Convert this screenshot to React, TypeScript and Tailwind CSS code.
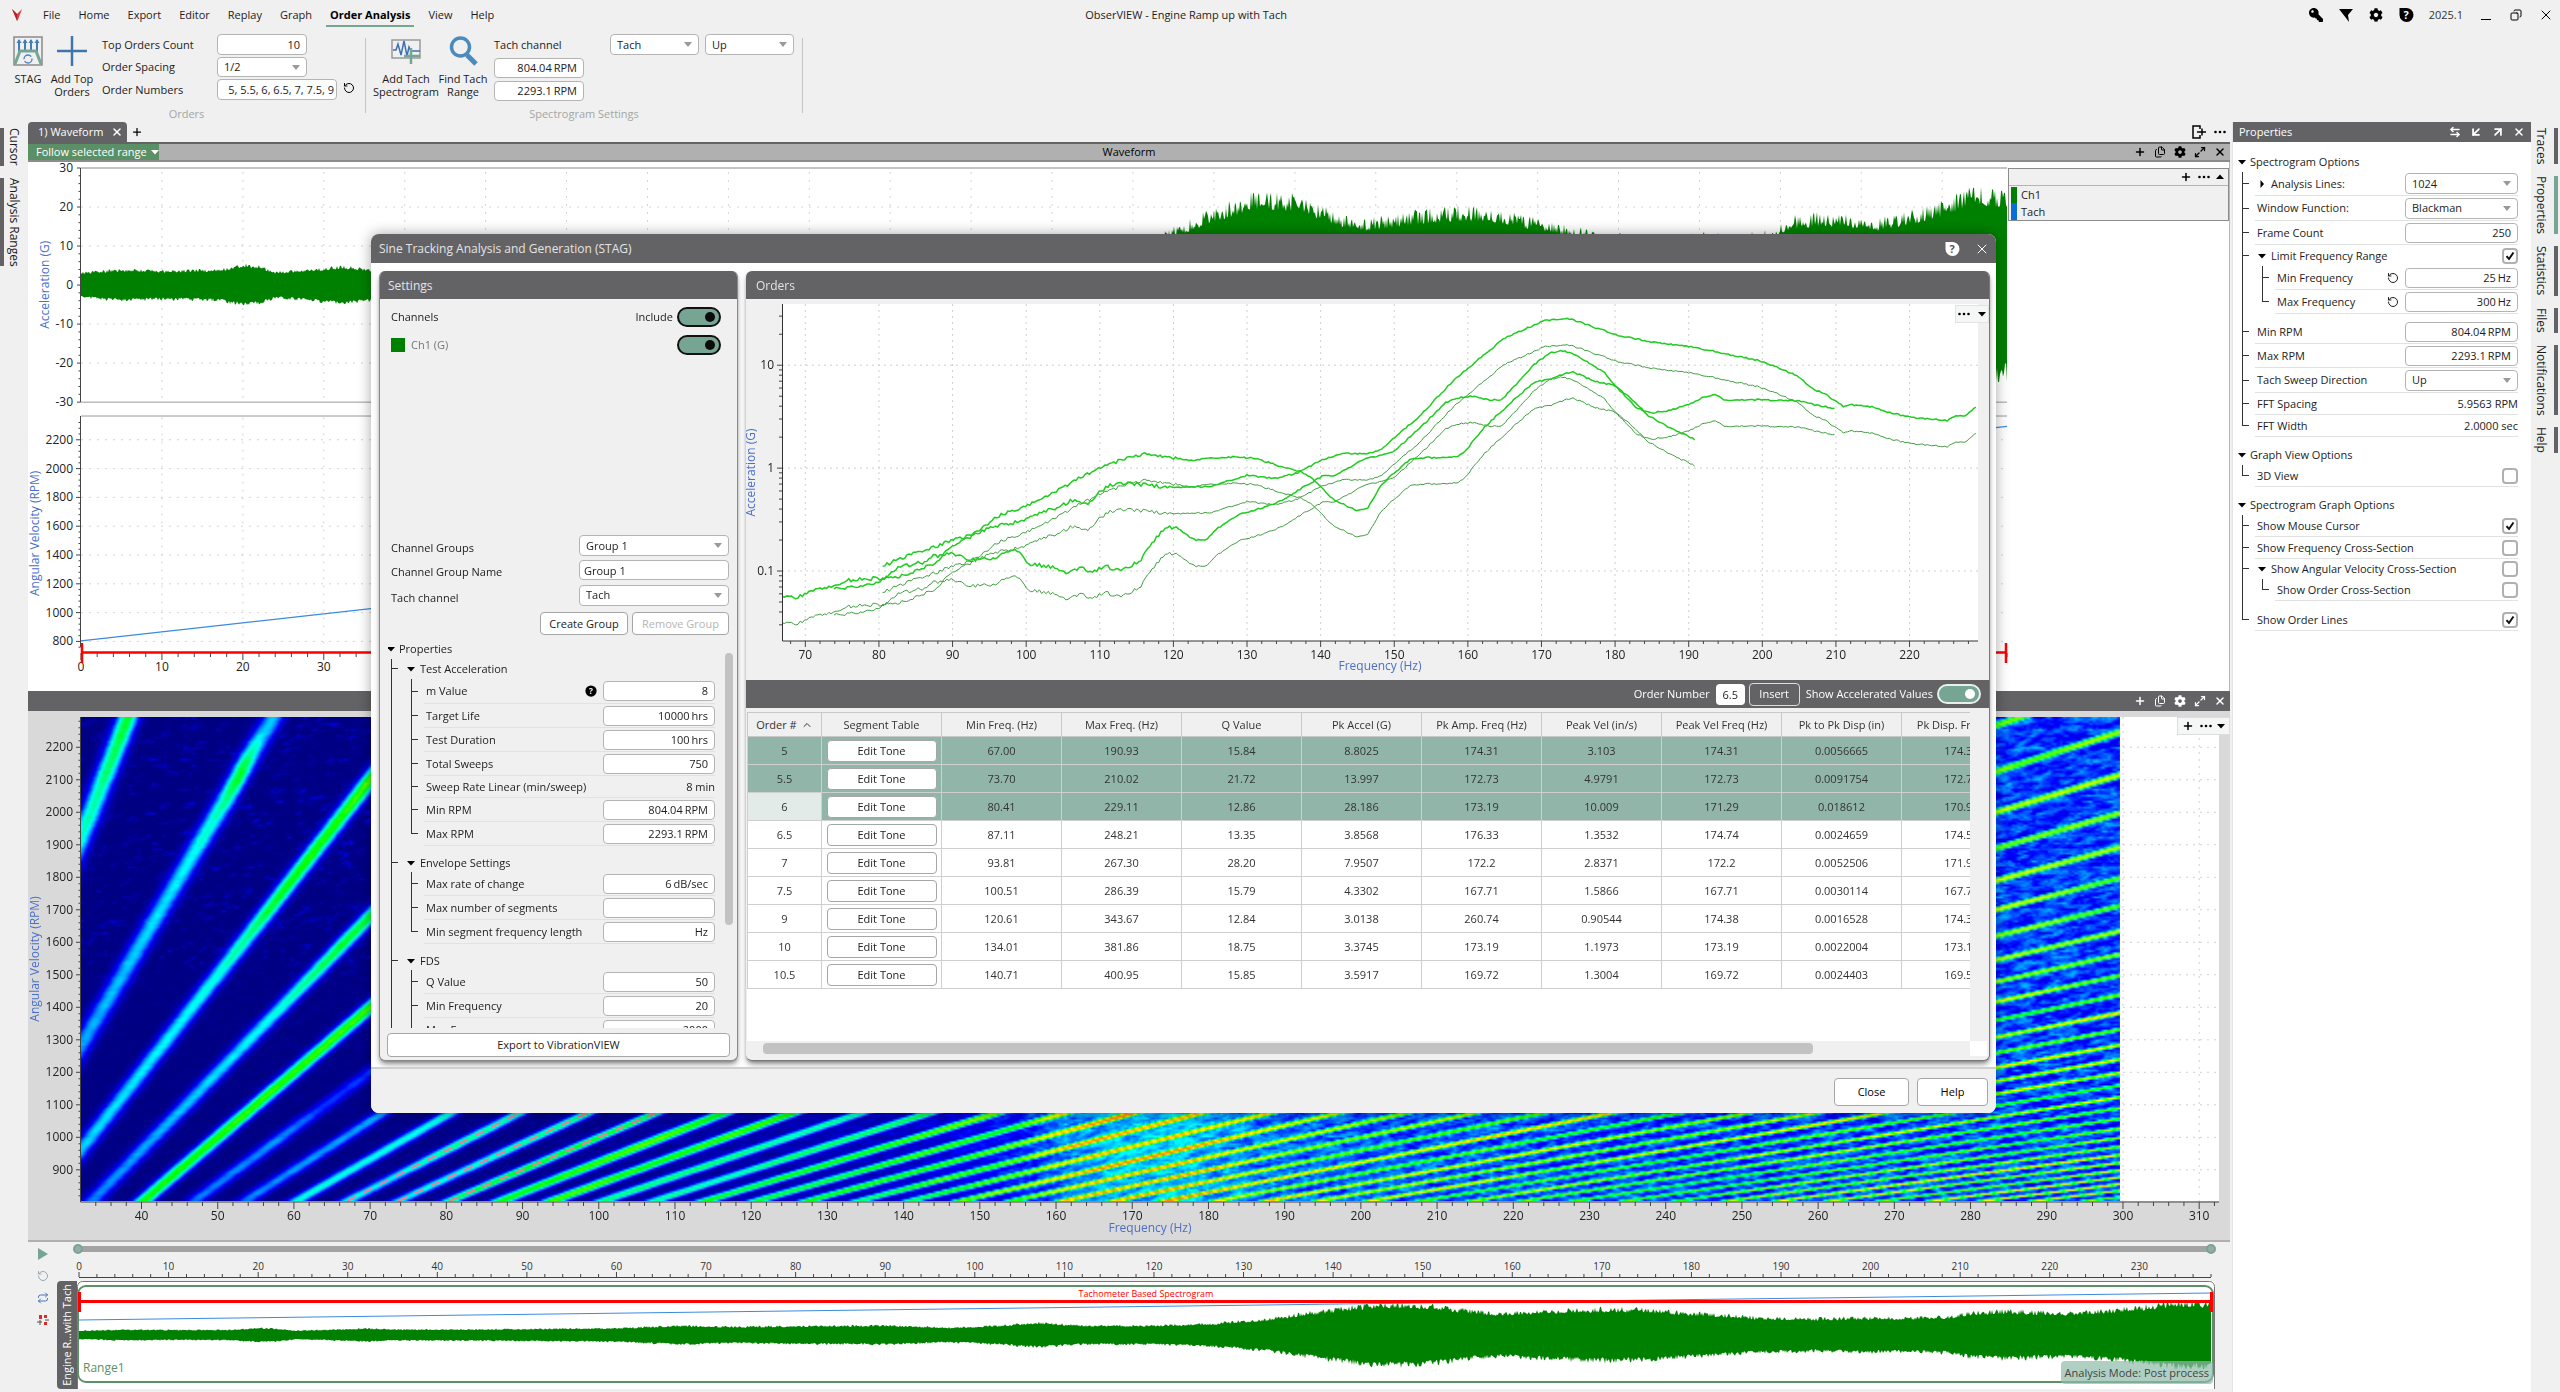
import { useEffect, useLayoutEffect, useRef, useState } from "react"
import type { ReactNode } from "react"
import { FaCog, FaKey } from "react-icons/fa"
import { ArrowDownLeft, ArrowLeftRight, ArrowUpRight, ChevronUp, Copy, Files, Maximize2, Plus, Repeat, RotateCw, X } from "lucide-react"

type Point = [number, number]

// ---------- helpers ----------

function useSize() {
  const ref = useRef<HTMLDivElement>(null)
  const [size, setSize] = useState({ w: 0, h: 0 })
  useLayoutEffect(() => {
    const el = ref.current
    if (!el) return
    setSize({ w: el.clientWidth, h: el.clientHeight })
    const observer = new ResizeObserver(() => setSize({ w: el.clientWidth, h: el.clientHeight }))
    observer.observe(el)
    return () => observer.disconnect()
  }, [])
  return { ref, ...size }
}

function range(from: number, to: number, step: number) {
  const out: number[] = []
  for (let v = from; v <= to + step / 1000; v += step) out.push(v)
  return out
}

function interp(points: Point[], x: number) {
  if (x <= points[0][0]) return points[0][1]
  for (let i = 1; i < points.length; i++) {
    if (x <= points[i][0]) {
      const [x0, y0] = points[i - 1]
      const [x1, y1] = points[i]
      return y0 + ((x - x0) / (x1 - x0)) * (y1 - y0)
    }
  }
  return points[points.length - 1][1]
}

function hash(x: number, y: number) {
  let h = Math.imul(x | 0, 374761393) + Math.imul(y | 0, 668265263)
  h = Math.imul(h ^ (h >>> 13), 1274126177)
  return ((h ^ (h >>> 16)) >>> 0) / 4294967295
}

function noise(x: number, y: number) {
  const ix = Math.floor(x)
  const iy = Math.floor(y)
  const fx = x - ix
  const fy = y - iy
  const a = hash(ix, iy) * (1 - fx) + hash(ix + 1, iy) * fx
  const b = hash(ix, iy + 1) * (1 - fx) + hash(ix + 1, iy + 1) * fx
  return a * (1 - fy) + b * fy
}

// ---------- data ----------

const DURATION = 238
const MIN_RPM = 804.04
const MAX_RPM = 2293.1

// [seconds, G]
const envelope: Point[] = [
  [0, 3.2], [5, 4], [10, 3.7], [17, 3.9], [20, 5.2], [22, 4.8], [24, 3.3], [28, 3.9], [32, 4.8], [36, 4], [44, 4.2], [52, 4.6],
  [60, 5], [67, 7], [72, 6], [80, 6.6], [90, 7], [97, 5.4], [102, 6.6], [107, 9], [112, 7], [120, 7], [127, 8.6], [133, 12],
  [137, 16], [140, 18.5], [145, 22.5], [150, 22], [153, 19.7], [156, 17], [159, 16], [165, 18], [170, 19], [174, 18.8], [178, 17],
  [183, 15], [188, 12.6], [194, 12], [199, 12.8], [204, 12.4], [209, 13.4], [211, 16.4], [215, 17.6], [220, 16.6], [222, 16],
  [227, 18.3], [231, 21], [234, 23.8], [238, 23],
]

// [Hz, dB re 1 G]
const order5: Point[] = [
  [66.9, -25.2], [69, -25.1], [71, -23.6], [73.7, -22.8], [75.7, -21.8], [80, -21.4], [83, -21], [85.6, -19.7], [87.9, -18.4],
  [88.9, -16.2], [90.2, -14.8], [92.5, -13.3], [93.8, -11.7], [96.4, -9.2], [99.7, -7.6], [102, -6.1], [105.7, -3.1], [109.6, -0.1],
  [114, 2.1], [116.4, 2.7], [119, 2.3], [122.4, 1.5], [125.2, 2], [128.4, 2.2], [131.2, 1.9], [134, 0.6], [137.1, -0.6], [138.7, -1.9],
  [141.9, -6.3], [145.1, -8.3], [146.3, -7.9], [148.3, -3.1], [149.9, -1.1], [152.3, 1.9], [158.6, 2.2], [159.8, 3.5], [161.8, 7.3],
  [164.2, 10.6], [166.6, 13.7], [169, 16.7], [171.4, 17.4], [174.2, 18.8], [177, 17], [180, 16], [181.8, 14], [184.5, 10.2],
  [187.7, 7.7], [190.9, 5.5],
]

const order55: Point[] = [
  [73.9, -23.5], [79.6, -22.5], [80.6, -21.4], [82.9, -19.2], [85.9, -18.3], [87.2, -17.2], [89.8, -16.6], [92.5, -17.8], [95.8, -17.5],
  [98.1, -15.9], [99.1, -16.5], [100.4, -18.6], [103, -19.1], [105.7, -20.3], [107.6, -19.4], [108.6, -20.3], [110.9, -19.1],
  [112.6, -19.9], [114.1, -19.1], [115.6, -17.8], [116.8, -15], [118.8, -11.7], [120.4, -11.4], [121.6, -12.8], [123, -14],
  [124.4, -13.9], [126, -11.7], [128.8, -9.1], [133.9, -6.9], [137.1, -4.2], [140.3, -1.5], [141.9, -1.4], [145.9, 1.7], [149.9, 3.2],
  [153.1, 7.3], [157, 12.7], [159, 13.8], [160.6, 14], [163, 13.2], [164.6, 13.3], [166.6, 16.3], [169, 20.1], [171, 22.3],
  [172.7, 22.9], [174.6, 22.1], [178.6, 18.5], [180.2, 15.8], [182.9, 11.7], [184.9, 10.7], [187.3, 11.2], [190, 12.4], [192.1, 13.8],
  [193.7, 14.3], [194.9, 13.2], [200, 13.3], [204.9, 13.1], [207.3, 12.2], [209.9, 11.6],
]

const order6: Point[] = [
  [80.5, -19.1], [83, -17.5], [87.2, -15.5], [90.2, -13.9], [93, -12.8], [95.1, -11.5], [98.1, -10.7], [100.4, -9.8], [103.4, -7.8],
  [104.3, -7.8], [106, -6.3], [107.1, -6.3], [108.3, -7.2], [110, -4.5], [111.6, -3.2], [114, -3], [120.4, -3.8], [125.2, -3.5],
  [130, -1.4], [134, -2], [136.7, -1], [139.9, 1.4], [142.7, 2.8], [146.3, 2.8], [148.3, 3.6], [149.9, 5.8], [153.5, 10.2],
  [157.8, 16.7], [161, 20.6], [165, 25.3], [168.2, 27.3], [170.6, 28.8], [173.8, 29], [177, 27.5], [180.2, 25.9], [184.9, 24.5],
  [190.5, 23.6], [195.3, 22.1], [199.3, 21], [202.5, 19.3], [204.9, 17.8], [206.9, 15.4], [208.5, 14.4], [211.1, 11.9], [212, 12.3],
  [215.2, 11.9], [216.8, 10.9], [220.4, 9.8], [223.2, 9.5], [225.2, 9.2], [226, 10], [227.6, 10.2], [229, 11.9],
]

const headings = [
  "Segment Table", "Min Freq. (Hz)", "Max Freq. (Hz)", "Q Value", "Pk Accel (G)", "Pk Amp. Freq (Hz)",
  "Peak Vel (in/s)", "Peak Vel Freq (Hz)", "Pk to Pk Disp (in)", "Pk Disp. Freq (Hz)",
]

const orders = [
  ["5", "67.00", "190.93", "15.84", "8.8025", "174.31", "3.103", "174.31", "0.0056665", "174.31"],
  ["5.5", "73.70", "210.02", "21.72", "13.997", "172.73", "4.9791", "172.73", "0.0091754", "172.73"],
  ["6", "80.41", "229.11", "12.86", "28.186", "173.19", "10.009", "171.29", "0.018612", "170.93"],
  ["6.5", "87.11", "248.21", "13.35", "3.8568", "176.33", "1.3532", "174.74", "0.0024659", "174.53"],
  ["7", "93.81", "267.30", "28.20", "7.9507", "172.2", "2.8371", "172.2", "0.0052506", "171.93"],
  ["7.5", "100.51", "286.39", "15.79", "4.3302", "167.71", "1.5866", "167.71", "0.0030114", "167.71"],
  ["9", "120.61", "343.67", "12.84", "3.0138", "260.74", "0.90544", "174.38", "0.0016528", "174.38"],
  ["10", "134.01", "381.86", "18.75", "3.3745", "173.19", "1.1973", "173.19", "0.0022004", "173.19"],
  ["10.5", "140.71", "400.95", "15.85", "3.5917", "169.72", "1.3004", "169.72", "0.0024403", "169.53"],
]

// ---------- small controls ----------

function Field({ label, value, unit = "", className = "" }: { label: string; value: string; unit?: string; className?: string }) {
  return (
    <span className={`flex h-5 items-center rounded border border-[#b4b4b4] bg-white pl-1 pr-1.5 ${className}`}>
      <input aria-label={label} defaultValue={value} className="w-0 min-w-0 flex-1 bg-transparent text-right outline-none" />
      {unit && <span className="pl-0.5">{unit}</span>}
    </span>
  )
}

function Select({ label, value, className = "" }: { label: string; value: string; className?: string }) {
  return (
    <span className={`grid items-center rounded border border-[#b4b4b4] bg-white ${className}`}>
      <select aria-label={label} defaultValue={value} className="col-start-1 row-start-1 h-full w-full appearance-none bg-transparent px-1.5 outline-none">
        <option>{value}</option>
      </select>
      <svg viewBox="0 0 8 5" className="pointer-events-none col-start-1 row-start-1 mr-1.5 h-[5px] w-2 justify-self-end" fill="#999">
        <path d="M0 0h8L4 5z" />
      </svg>
    </span>
  )
}

function Switch({ label, dark = false }: { label: string; dark?: boolean }) {
  return (
    <button
      role="switch"
      aria-checked="true"
      aria-label={label}
      className={`flex h-5 w-11 items-center justify-end rounded-full bg-[#76a594] px-1 ${dark ? "border-2 border-[#111]" : "border-2 border-[#e8efec]"}`}
    >
      <span className={`h-2.5 w-2.5 rounded-full ${dark ? "bg-[#0c0c0c]" : "bg-white"}`} />
    </button>
  )
}

function Check({ label, on = false }: { label: string; on?: boolean }) {
  return (
    <span className="grid h-4 w-4 place-items-center">
      <input
        type="checkbox"
        aria-label={label}
        defaultChecked={on}
        className="col-start-1 row-start-1 h-4 w-4 appearance-none rounded border-2 border-[#b0b0b0] bg-white"
      />
      {on && (
        <svg viewBox="0 0 10 10" className="pointer-events-none col-start-1 row-start-1 h-2.5 w-2.5" fill="none" stroke="#111" strokeWidth="2">
          <path d="M1.500 5.200 4 8l4.500-6.500" />
        </svg>
      )}
    </span>
  )
}

function Caret({ dir = "down", className = "" }: { dir?: "down" | "right" | "up"; className?: string }) {
  const d = { down: "M0 2h8L4 6.500z", right: "M2.500 0v8L6 4z", up: "M0 6h8L4 1.500z" }[dir]
  return (
    <svg viewBox="0 0 8 8" className={`h-2 w-2 shrink-0 ${className}`} fill="currentColor">
      <path d={d} />
    </svg>
  )
}

function HelpBadge({ className = "", mark, round = false }: { className?: string; mark: string; round?: boolean }) {
  return (
    <svg viewBox="0 0 16 16" className={className}>
      {round ? <circle cx="8" cy="8" r="7.500" fill="currentColor" /> : <path d="M1.500 1H8a7 7 0 1 1-6.500 7z" fill="currentColor" />}
      <text x="8" y="12" textAnchor="middle" fontSize="11" fontWeight="700" fill={mark}>?</text>
    </svg>
  )
}

function Dots({ className = "" }: { className?: string }) {
  return (
    <svg viewBox="0 0 12 4" className={`h-1 w-3 ${className}`} fill="currentColor">
      <circle cx="1.500" cy="2" r="1.300" />
      <circle cx="6" cy="2" r="1.300" />
      <circle cx="10.500" cy="2" r="1.300" />
    </svg>
  )
}

function Button({ children, className = "", disabled = false }: { children: ReactNode; className?: string; disabled?: boolean }) {
  return (
    <button disabled={disabled} className={`rounded border border-[#a6a6a6] bg-white text-center disabled:text-[#b5b5b5] ${className}`}>
      {children}
    </button>
  )
}

// ---------- property tree ----------

function Branch({ last = false }: { last?: boolean }) {
  return (
    <span className="flex w-[13px] shrink-0 flex-col self-stretch pr-1.5">
      <span className="h-1/2 border-b border-l border-[#333]" />
      <span className={`h-1/2 ${last ? "" : "border-l border-[#333]"}`} />
    </span>
  )
}

interface RowProps {
  label: string
  height?: string
  depth?: 1 | 2
  last?: boolean
  caret?: "down" | "right"
  line?: boolean
  children?: ReactNode
}

function Row({ label, height = "h-6", depth = 1, last, caret, line = true, children }: RowProps) {
  return (
    <div className={`flex ${height}`}>
      {depth === 2 && <span className="w-5 shrink-0 border-l border-[#333]" />}
      <Branch last={last} />
      <div className={`flex min-w-0 flex-1 items-center ${line ? "border-b border-[#e0e3e2]" : ""}`}>
        {caret && <Caret dir={caret} className="ml-[3px] mr-[3px] text-black" />}
        <span className="flex-1 whitespace-nowrap pl-0.5">{label}</span>
        {children}
      </div>
    </div>
  )
}

function Gap({ height = "h-2", open = true }: { height?: string; open?: boolean }) {
  return <div className={`${height} ${open ? "border-l border-[#333]" : ""}`} />
}

function TreeHeading({ children }: { children: string }) {
  return (
    <div className="flex h-5 items-center gap-1">
      <Caret className="-ml-1 text-black" />
      {children}
    </div>
  )
}

// ---------- header ----------

const menu = ["File", "Home", "Export", "Editor", "Replay", "Graph", "Order Analysis", "View", "Help"]

function TitleBar() {
  return (
    <header className="flex h-[30px] shrink-0 items-center">
      <nav className="flex w-[42%] items-center gap-[18px] pl-3">
        <svg viewBox="0 0 10 12" className="mr-[3px] h-3 w-2.5">
          <path d="M0 0 5 5 10 0 5.500 12z" fill="#e23a3a" />
          <path d="M0 0 5 5v7z" fill="#b31f24" />
        </svg>
        {menu.map((item) => (
          <a key={item} href="#" className={item === "Order Analysis" ? "-mx-1 mt-1 border-b-2 border-[#76a594] px-1 pb-0.5 font-bold text-black" : ""}>
            {item}
          </a>
        ))}
      </nav>
      <h1 className="pl-2.5">ObserVIEW - Engine Ramp up with Tach</h1>
      <div className="ml-auto flex items-center text-black">
        <button aria-label="License" className="w-[30px]"><FaKey className="mx-auto h-3.5 w-3.5 -scale-x-100" /></button>
        <button aria-label="Filter" className="w-[30px]">
          <svg viewBox="0 0 14 14" className="mx-auto h-3.5 w-3.5"><path d="M0 1h14L9 7l1 7-3-4z" /></svg>
        </button>
        <button aria-label="Settings" className="w-[30px]"><FaCog className="mx-auto h-3.5 w-3.5" /></button>
        <button aria-label="Help" className="w-[30px]"><HelpBadge className="mx-auto h-4 w-4" mark="#fff" /></button>
        <span className="mx-2 text-[#333]">2025.1</span>
        <button aria-label="Minimize" className="w-[30px]"><span className="mx-auto mt-2 block h-px w-2.5 bg-black" /></button>
        <button aria-label="Restore" className="w-[30px]"><Copy className="mx-auto h-3 w-3 -scale-x-100" strokeWidth={2} /></button>
        <button aria-label="Close" className="w-[29px]"><X className="mx-auto h-4 w-4" strokeWidth={1.5} /></button>
      </div>
    </header>
  )
}

function Ribbon() {
  return (
    <div className="flex h-[92px] shrink-0 items-start pl-2 pt-1">
      <div className="flex w-[357px] flex-col">
        <div className="flex h-[72px] items-start">
          <button className="flex w-10 flex-col items-center leading-[13px]">
            <svg viewBox="0 0 30 30" className="my-0.5 h-[30px] w-[30px]" fill="none">
              <rect x="1" y="1" width="28" height="28" stroke="#8a8a8a" strokeWidth="1.500" />
              <path d="M6 16V4M12 14V4M18 14V4M24 16V4" stroke="#3f7fb5" strokeWidth="2" />
              <path d="M3.500 7 6 3l2.500 4zM9.500 7 12 3l2.500 4zM15.500 7 18 3l2.500 4zM21.500 7 24 3l2.500 4z" fill="#3f7fb5" />
              <path d="M2 28 7 15h16l5 13" stroke="#76a594" strokeWidth="3" />
              <circle cx="15" cy="23" r="4" stroke="#4a7fc0" strokeWidth="1.300" strokeDasharray="10 2" />
            </svg>
            <span className="mt-1">STAG</span>
          </button>
          <button className="flex w-12 flex-col items-center leading-[13px]">
            <svg viewBox="0 0 30 30" className="my-0.5 h-[30px] w-[30px]">
              <path d="M15 0v30M0 15h30" stroke="#4173ad" strokeWidth="2.500" />
            </svg>
            <span className="mt-1">Add Top Orders</span>
          </button>
          <div className="ml-1.5 grid w-[235px] shrink-0 grid-cols-[115px_1fr] items-center gap-y-0.5">
            <label htmlFor="top-orders">Top Orders Count</label>
            <span className="flex h-[21px] w-[90px] rounded border border-[#b4b4b4] bg-white px-1.5">
              <input id="top-orders" defaultValue="10" className="w-0 min-w-0 flex-1 text-right outline-none" />
            </span>
            <span>Order Spacing</span>
            <Select label="Order Spacing" value="1/2" className="h-5 w-[90px]" />
            <label htmlFor="order-numbers">Order Numbers</label>
            <input id="order-numbers" defaultValue="5, 5.5, 6, 6.5, 7, 7.5, 9" className="h-[21px] w-[120px] rounded border border-[#b4b4b4] bg-white px-0.5 text-right" />
          </div>
          <button aria-label="Reset" className="ml-1.5 mt-12 text-black"><RotateCw className="h-3 w-3 -scale-x-100" /></button>
        </div>
        <span className="text-center text-[#a3a7a5]">Orders</span>
      </div>
      <div className="mt-1 h-[75px] w-px bg-[#c4c4c4]" />
      <div className="flex w-[436px] flex-col">
        <div className="flex h-[72px] items-start pl-1.5">
          <button className="flex w-[68px] flex-col items-center leading-[13px]">
            <svg viewBox="0 0 30 30" className="my-0.5 h-[30px] w-[30px]" fill="none">
              <rect x="1" y="4" width="28" height="18" stroke="#999" strokeWidth="1.500" />
              <path d="M2 14h3l2-6 3 11 3-14 3 15 2-9 2 4h9" stroke="#3f6fb5" strokeWidth="1.500" />
              <path d="M20 12v16M13 20h16" stroke="#76a594" strokeWidth="2.500" />
            </svg>
            <span className="mt-1">Add Tach Spectrogram</span>
          </button>
          <button className="-ml-1 mr-1 flex w-[54px] flex-col items-center leading-[13px]">
            <svg viewBox="0 0 30 30" className="my-0.5 h-[30px] w-[30px]" fill="none" stroke="#4a8abd">
              <circle cx="12.500" cy="11" r="9" strokeWidth="3.500" />
              <path d="m19 19 9 9" strokeWidth="5" />
            </svg>
            <span className="mt-1">Find Tach Range</span>
          </button>
          <div className="flex w-[90px] flex-col gap-[3px]">
            <span className="flex h-[21px] items-center">Tach channel</span>
            <Field label="Minimum RPM" value="804.04" unit="RPM" />
            <Field label="Maximum RPM" value="2293.1" unit="RPM" />
          </div>
          <Select label="Tach channel" value="Tach" className="ml-[26px] h-[21px] w-[89px]" />
          <Select label="Tach sweep direction" value="Up" className="ml-1.5 h-[21px] w-[89px]" />
        </div>
        <span className="text-center text-[#a3a7a5]">Spectrogram Settings</span>
      </div>
      <div className="mt-1 h-[75px] w-px bg-[#c4c4c4]" />
    </div>
  )
}

function Rail({ items, side }: { items: string[]; side: "left" | "right" }) {
  return (
    <aside className={`flex shrink-0 flex-col gap-3 pt-1.5 text-xs ${side === "left" ? "w-7" : "w-[29px]"}`}>
      {items.map((item) => (
        <button key={item} className={`flex items-stretch ${side === "left" ? "gap-px" : "flex-row-reverse gap-1 pr-0.5"}`}>
          <span className={`w-1 ${item === "Properties" ? "bg-[#76a594]" : "bg-[#636365]"}`} />
          <span className="leading-[18px] [writing-mode:vertical-rl]">{item}</span>
        </button>
      ))}
    </aside>
  )
}

function PaneIcons() {
  return (
    <div className="flex items-center gap-2 pr-1">
      <button aria-label="Add"><Plus className="h-3 w-3" strokeWidth={3} /></button>
      <button aria-label="Duplicate"><Files className="h-3 w-3" /></button>
      <button aria-label="Graph settings"><FaCog className="h-3 w-3" /></button>
      <button aria-label="Expand"><Maximize2 className="h-3 w-3" strokeWidth={2.5} /></button>
      <button aria-label="Close pane"><X className="h-3 w-3" strokeWidth={3} /></button>
    </div>
  )
}

// ---------- charts ----------

function noisyEnvelope(width: number, center: number, scale: number, left: number, seed: number) {
  const top: string[] = []
  const bottom: string[] = []
  for (let x = 0; x <= width; x++) {
    const g = interp(envelope, (x / width) * DURATION)
    const up = g * (0.86 + 0.22 * hash(x, seed) ** 1.5)
    const down = g * (0.86 + 0.22 * hash(x, seed + 9) ** 1.5)
    top.push(`${left + x},${(center - up * scale).toFixed(1)}`)
    bottom.unshift(`${left + x},${(center + down * scale).toFixed(1)}`)
  }
  return top.concat(bottom).join(" ")
}

function WaveformChart() {
  const { ref, w, h } = useSize()
  const k = h / 530
  const left = 53
  const right = w - 1
  const x = (t: number) => left + (t / DURATION) * (right - left)
  const yG = (g: number) => (123.3 - g * 3.91) * k
  const yR = (r: number) => (278.3 + (2200 - r) * 0.1443) * k

  return (
    <div ref={ref} className="min-w-0 flex-1 overflow-hidden">
      {w > 0 && (
        <svg width={w} height={h} className="block text-[12px]" fill="#222">
          <g stroke="#d4d4d4" strokeDasharray="2 6">
            {range(10, 230, 10).map((t) => <path key={t} d={`M${x(t)} ${10 * k}V${240 * k}M${x(t)} ${256 * k}V${486 * k}`} />)}
            {range(-20, 20, 10).map((g) => <path key={g} d={`M${left} ${yG(g)}H${right}`} />)}
            {range(800, 2200, 200).map((r) => <path key={r} d={`M${left} ${yR(r)}H${right}`} />)}
          </g>
          <path d={`M${left} ${yG(30)}H${right}`} stroke="#c4c4c4" strokeWidth="2" />
          <path d={`M${left} ${yG(-30)}H${right}M${left} ${254.500 * k}H${right}`} stroke="#999" />
          <path d={`M52.500 ${yG(30)}V${yG(-30)}M52.500 ${254.500 * k}V${486 * k}`} stroke="#444" />
          <g stroke="#444">
            {range(-30, 30, 2).map((g) => <path key={g} d={`M${g % 10 === 0 ? 49 : 50.5} ${yG(g)}H52.500`} />)}
            {range(760, 2320, 40).map((r) => <path key={r} d={`M${r % 200 === 0 ? 48 : 50.5} ${yR(r)}H52.500`} />)}
            {range(0, 238, 2).map((t) => <path key={t} d={`M${x(t)} ${492 * k}v${t % 10 === 0 ? 7 : 4}`} />)}
          </g>
          {range(-30, 30, 10).map((g) => <text key={g} x="45" y={yG(g) + 4} textAnchor="end">{g}</text>)}
          {range(800, 2200, 200).map((r) => <text key={r} x="45" y={yR(r) + 4} textAnchor="end">{r}</text>)}
          {range(0, 230, 10).map((t) => <text key={t} x={x(t)} y={510 * k} textAnchor="middle">{t}</text>)}
          <text transform={`translate(21 ${123 * k}) rotate(-90)`} textAnchor="middle" fill="#4a6fcb">Acceleration (G)</text>
          <text transform={`translate(11 ${372 * k}) rotate(-90)`} textAnchor="middle" fill="#4a6fcb">Angular Velocity (RPM)</text>
          <polygon points={noisyEnvelope(right - left, yG(0), 3.91 * k, left, 3)} fill="#008000" />
          <path d={`M${x(0)} ${yR(MIN_RPM)}L${x(238)} ${yR(MAX_RPM)}`} stroke="#3b8ae0" strokeWidth="1.300" />
          <path d={`M${left} ${491.500 * k}H${right}M${left + 1} ${482 * k}v20M${right - 1} ${482 * k}v20`} stroke="#f00" strokeWidth="2.500" />
        </svg>
      )}
    </div>
  )
}

const palette: [number, number, number, number][] = [
  [0, 0, 0, 130], [0.2, 0, 0, 255], [0.4, 0, 255, 255], [0.55, 0, 255, 0], [0.7, 255, 255, 0], [0.84, 255, 140, 0], [1, 255, 0, 0],
]

function colorAt(v: number) {
  const t = Math.min(0.84, Math.max(0, v))
  let i = 1
  while (palette[i][0] < t) i++
  const a = palette[i - 1]
  const b = palette[i]
  const m = (t - a[0]) / (b[0] - a[0])
  return [a[1] + (b[1] - a[1]) * m, a[2] + (b[2] - a[2]) * m, a[3] + (b[3] - a[3]) * m]
}

const floorLevel: Point[] = [[30, 0], [90, 0.01], [115, 0.05], [140, 0.1], [155, 0.2], [165, 0.33], [176, 0.35], [190, 0.26], [230, 0.23], [300, 0.23]]
const floorNoise: Point[] = [[30, 0.02], [90, 0.04], [130, 0.08], [160, 0.14], [300, 0.18]]
const gain: Point[] = [[30, 0], [75, 0.04], [110, 0.12], [125, 0.1], [140, 0.14], [155, 0.22], [165, 0.38], [176, 0.41], [185, 0.31], [200, 0.24], [240, 0.21], [262, 0.26], [300, 0.23]]
const lowOrders: Record<string, Point[]> = {
  "1": [[32, 0.42], [38, 0.53]],
  "1.5": [[32, 0.33], [45, 0.39], [50, 0.44], [53, 0.55], [56, 0.37]],
  "2": [[32, 0.36], [50, 0.42], [58, 0.54], [70, 0.59]],
  "2.5": [[33, 0.3], [45, 0.35], [58, 0.42], [66, 0.53]],
  "3": [[40, 0.56], [70, 0.59], [90, 0.56]],
  "3.5": [[46, 0.29], [58, 0.32], [64, 0.24]],
  "4": [[50, 0.3], [70, 0.33]],
  "4.5": [[58, 0.42], [80, 0.42]],
}

function spectrogramLevel(f: number, rpm: number, px: number, py: number) {
  const order = (f * 60) / rpm
  const nearest = Math.round(order * 2) / 2
  const d = ((order - nearest) * rpm) / 60
  const low = lowOrders[String(nearest)]
  const n = noise(px / 4 + py / 3, py / 1.5) * 0.7 + noise(px / 1.5, py + 70) * 0.3
  const quiet = rpm > 1500 && f < 120 ? Math.max(0, n - 0.66) * 0.5 : 0
  const floor = interp(floorLevel, f) + (n - 0.46) * interp(floorNoise, f) * 1.5 + quiet
  const base = low ? 0 : 0.33 + 0.14 * hash(Math.round(nearest * 2), 5)
  const fade = (noise(f / 9, nearest * 7) - 0.5) * 0.12
  const peak = low ? interp(low, f) : Math.min(0.82, base + interp(gain, f) + fade)
  const width = nearest < 2 ? 1.6 : nearest < 6.5 ? 1.5 : 1.85
  const line = peak * Math.exp(-((Math.abs(d) / width) ** 2.2))
  return Math.max(floor, line + floor * 0.1 + (n - 0.5) * 0.04)
}

function Spectrogram() {
  const { ref, w, h } = useSize()
  const canvas = useRef<HTMLCanvasElement>(null)
  const left = 53
  const right = w - 11
  const top = 6
  const bottom = h - 40
  const f0 = 32.06
  const f1 = 312.6
  const x = (f: number) => left + ((f - f0) / (f1 - f0)) * (right - left)
  const y = (r: number) => top + ((MAX_RPM - r) / (MAX_RPM - MIN_RPM)) * (bottom - top)

  useEffect(() => {
    const ctx = canvas.current?.getContext("2d")
    if (!ctx) return
    const { width, height } = ctx.canvas
    const image = ctx.createImageData(width, height)
    for (let py = 0; py < height; py++) {
      const rpm = MAX_RPM - ((py + 0.5) / height) * (MAX_RPM - MIN_RPM)
      for (let px = 0; px < width; px++) {
        const f = f0 + ((px + 0.5) / width) * (299.6 - f0)
        const [r, g, b] = colorAt(spectrogramLevel(f, rpm, px, py))
        const i = (py * width + px) * 4
        image.data[i] = r
        image.data[i + 1] = g
        image.data[i + 2] = b
        image.data[i + 3] = 255
      }
    }
    ctx.putImageData(image, 0, 0)
  }, [w > 0])

  return (
    <div ref={ref} className="relative min-h-0 flex-[531] overflow-hidden border-b-2 border-[#b0b0b0] bg-[#d9d9d9]">
      {w > 0 && (
        <>
          <canvas
            ref={canvas}
            width={1020}
            height={243}
            className="absolute"
            style={{ left, top, width: x(299.6) - left, height: bottom - top }}
          />
          <svg width={w} height={h} className="absolute inset-0 text-[12px]" fill="#222">
            <rect x={x(299.6)} y={top} width={right - x(299.6)} height={bottom - top} fill="#fff" />
            <g stroke="#d0d0d0" strokeDasharray="2 5">
              {[300, 310].map((f) => <path key={f} d={`M${x(f)} ${top}V${bottom}`} />)}
              {range(900, 2200, 100).map((r) => <path key={r} d={`M${x(300)} ${y(r)}H${right}`} />)}
            </g>
            <g stroke="#f57a9c" strokeWidth="2" strokeDasharray="10 8">
              {[5, 5.5, 6].map((o) => (
                <path key={o} d={`M${x((o * MIN_RPM) / 60)} ${y(MIN_RPM)}L${x((o * MAX_RPM) / 60)} ${y(MAX_RPM)}`} />
              ))}
            </g>
            <path d={`M52.500 ${top}V${bottom + 1}H${right}`} stroke="#444" fill="none" />
            <g stroke="#444">
              {range(820, 2280, 20).map((r) => <path key={r} d={`M${r % 100 === 0 ? 48 : 50.5} ${y(r)}H52.500`} />)}
              {range(34, 312, 2).map((f) => <path key={f} d={`M${x(f)} ${bottom + 1}v${f % 10 === 0 ? 7 : 4}`} />)}
            </g>
            {range(900, 2200, 100).map((r) => <text key={r} x="45" y={y(r) + 4} textAnchor="end">{r}</text>)}
            {range(40, 310, 10).map((f) => <text key={f} x={x(f)} y={bottom + 19} textAnchor="middle">{f}</text>)}
            <text x={(left + right) / 2} y={bottom + 31} textAnchor="middle" fill="#4a6fcb">Frequency (Hz)</text>
            <text transform={`translate(11 ${(top + bottom) / 2}) rotate(-90)`} textAnchor="middle" fill="#4a6fcb">Angular Velocity (RPM)</text>
          </svg>
          <div className="absolute right-0 top-1.5 flex h-[18px] w-[53px] items-center justify-between border border-[#ddd] bg-[#f5f7f6] px-1 text-black">
            <Plus className="h-3 w-3" strokeWidth={3} />
            <Dots />
            <Caret />
          </div>
        </>
      )}
    </div>
  )
}

function curvePath(points: Point[], shift: number, x: (f: number) => number, y: (db: number) => number, seed: number) {
  const first = points[0][0]
  const last = points[points.length - 1][0]
  return range(first, last, 0.3)
    .map((f, i) => {
      const rough = f < 120 ? 0.7 : 0.3
      const db = interp(points, f) + shift + (hash(i, seed) - 0.5) * rough
      return `${i ? "L" : "M"}${x(f).toFixed(1)} ${y(db).toFixed(1)}`
    })
    .join("")
}

function OrdersChart() {
  const { ref, w, h } = useSize()
  const left = 36
  const right = w - 11
  const top = 5
  const bottom = h - 39
  const x = (f: number) => left + ((f - 66.83) / (229.3 - 66.83)) * (right - left)
  const y = (db: number) => top + ((31.9 - db) / 65.5) * (bottom - top)
  const minor = [0.03, 0.04, 0.05, 0.06, 0.07, 0.08, 0.09, 0.2, 0.3, 0.4, 0.5, 0.6, 0.7, 0.8, 0.9, 2, 3, 4, 5, 6, 7, 8, 9, 20, 30]
  const curves: [Point[], number][] = [[order5, 1], [order55, 2], [order6, 3]]

  return (
    <div ref={ref} className="relative h-[381px] shrink-0 bg-[#f0f0f0]">
      {w > 0 && (
        <svg width={w} height={h} className="absolute inset-0 text-[12px]" fill="#222">
          <rect x={left} y={top} width={right - left} height={bottom - top} fill="#fff" />
          <g stroke="#d0d0d0" strokeDasharray="2 4">
            {range(70, 220, 10).map((f) => <path key={f} d={`M${x(f)} ${top}V${bottom}`} />)}
            {[20, 0, -20].map((db) => <path key={db} d={`M${left} ${y(db)}H${right}`} />)}
          </g>
          <g fill="none">
            {curves.map(([points, seed]) => <path key={seed} d={curvePath(points, -5.1, x, y, seed)} stroke="#3f9e3f" />)}
            {curves.map(([points, seed]) => <path key={seed} d={curvePath(points, 0, x, y, seed)} stroke="#1fcc1f" strokeWidth="1.500" />)}
          </g>
          <path d={`M36.500 ${top}V${bottom}H${right}`} fill="none" stroke="#333" />
          <g stroke="#444">
            {minor.map((g) => <path key={g} d={`M33 ${y(20 * Math.log10(g))}h3`} />)}
            {[20, 0, -20].map((db) => <path key={db} d={`M31 ${y(db)}h5`} />)}
            {range(68, 228, 2).map((f) => <path key={f} d={`M${x(f)} ${bottom}v${f % 10 === 0 ? 6 : 3}`} />)}
          </g>
          {[["10", 20], ["1", 0], ["0.1", -20]].map(([t, db]) => (
            <text key={t} x="28" y={y(Number(db)) + 4} textAnchor="end">{t}</text>
          ))}
          {range(70, 220, 10).map((f) => <text key={f} x={x(f)} y={bottom + 18} textAnchor="middle">{f}</text>)}
          <text x={(left + right) / 2} y={bottom + 29} textAnchor="middle" fill="#4a6fcb">Frequency (Hz)</text>
          <text transform={`translate(9 ${(top + bottom) / 2}) rotate(-90)`} textAnchor="middle" fill="#4a6fcb">Acceleration (G)</text>
        </svg>
      )}
      <div className="absolute right-0 top-1.5 flex h-[18px] w-[34px] items-center justify-between border border-[#e2e2e2] bg-[#f5f7f6] px-0.5 text-black">
        <Dots />
        <Caret />
      </div>
    </div>
  )
}

function Timeline() {
  const { ref, w } = useSize()
  const x = (t: number) => 2 + (t / DURATION) * (w - 6)

  return (
    <div className="flex h-[150px] shrink-0 pr-[15px]">
      <div className="flex w-[29px] flex-col items-center gap-2.5 pt-1.5">
        <button aria-label="Play"><svg viewBox="0 0 10 12" className="h-3 w-2.5" fill="#76a594"><path d="M0 0v12l10-6z" /></svg></button>
        <button aria-label="Loop"><RotateCw className="h-3 w-3 -scale-x-100 text-[#9aa7b8]" /></button>
        <button aria-label="Swap"><Repeat className="h-3 w-3 text-[#4a73b8]" /></button>
        <button aria-label="Snap">
          <svg viewBox="0 0 12 12" className="h-3 w-3"><path d="M2 1h3v4H2zM7 1h3v3H7zM7 8h3v3H7z" fill="#e02828" /><path d="M0 8h5M3 6v5M8 6h4" stroke="#555" /></svg>
        </button>
      </div>
      <div className="flex min-w-0 flex-1 flex-col">
        <div ref={ref} className="ml-5 h-[39px] shrink-0">
          {w > 0 && (
            <svg width={w} height={39} className="block overflow-visible text-[10px]" fill="#333">
              <path d={`M2 7H${w - 4}`} stroke="#a3a3a3" strokeWidth="6" />
              <circle cx="1" cy="7" r="4" fill="#9aa" stroke="#76a594" strokeWidth="2" />
              <circle cx={w - 4} cy="7" r="4" fill="#9aa" stroke="#76a594" strokeWidth="2" />
              {range(0, 230, 10).map((t) => <text key={t} x={x(t)} y="28" textAnchor="middle">{t}</text>)}
              <path d={`M2 35.500H${w - 4}`} stroke="#444" />
              {range(0, 238, 2).map((t) => <path key={t} d={`M${x(t)} 35v${t % 10 === 0 ? -5 : -3}`} stroke="#444" />)}
            </svg>
          )}
        </div>
        <div className="relative flex flex-1">
          <div className="flex h-[108px] w-5 items-center justify-center rounded-l bg-[#636365] text-white [writing-mode:vertical-rl]">
            <span className="rotate-180 whitespace-nowrap">Engine R...with Tach</span>
          </div>
          <svg width={w} height={108} className="block bg-white">
            <rect x="0.500" y="0.500" width={Math.max(0, w - 1)} height="115" rx="5" fill="none" stroke="#777" />
            <rect x="1" y="5" width={Math.max(0, w - 3)} height="96" rx="8" fill="none" stroke="#5b9068" strokeWidth="2" />
            {w > 0 && <polygon points={noisyEnvelope(w - 6, 54, 1.38, 2, 21)} fill="#008000" />}
            <path d={`M2 39L${w - 4} 12`} stroke="#3b8ae0" />
            <path d={`M2 20.500H${w - 3}M2.500 11v20M${w - 3.5} 11v20`} stroke="#f00" strokeWidth="3" />
            <text x={w / 2} y="16" textAnchor="middle" fontSize="9" fill="#f00">Tachometer Based Spectrogram</text>
            <text x="6" y="91" fontSize="12" fill="#5b9068">Range1</text>
          </svg>
          <span className="absolute right-0.5 top-20 h-[23px] rounded bg-[#8fbaa9]/70 px-1 leading-[23px] text-[#444]">Analysis Mode: Post process</span>
        </div>
      </div>
    </div>
  )
}

// ---------- STAG window ----------

function SettingsPanel() {
  return (
    <section className="flex w-[359px] shrink-0 flex-col overflow-hidden rounded-md border-x border-b border-[#8a8a8a] bg-[#f0f0f0] shadow-md shadow-black/40">
      <h3 className="flex h-7 shrink-0 items-center bg-[#636365] px-2 pt-0.5 text-[12px] text-[#e4e4e4]">Settings</h3>
      <div className="flex flex-1 flex-col overflow-hidden px-2 pt-1">
        <div className="flex h-7 items-center pl-[3px] pr-2">
          <span className="flex-1">Channels</span>
          <span className="pr-1">Include</span>
          <Switch label="Include all channels" dark />
        </div>
        <div className="flex h-7 items-center pl-[3px] pr-2">
          <span className="h-3.5 w-3.5 bg-[#008000]" />
          <span className="flex-1 pl-1.5 text-[#777]">Ch1 (G)</span>
          <Switch label="Include Ch1" dark />
        </div>
        <div className="mt-[176px] grid grid-cols-[1fr_150px] items-center gap-y-1 pl-[3px]">
          <span className="pt-1">Channel Groups</span>
          <Select label="Channel Groups" value="Group 1" className="h-[21px]" />
          <span className="pt-1">Channel Group Name</span>
          <input aria-label="Channel Group Name" defaultValue="Group 1" className="h-5 rounded border border-[#b4b4b4] bg-white px-1" />
          <span className="pt-1.5">Tach channel</span>
          <Select label="Tach channel" value="Tach" className="h-[21px]" />
        </div>
        <div className="mt-1.5 flex justify-end gap-1">
          <Button className="h-[23px] w-[88px]">Create Group</Button>
          <Button className="h-[23px] w-[97px]" disabled>Remove Group</Button>
        </div>
        <div className="-mr-1 mt-1 flex h-[389px] shrink-0 overflow-hidden">
          <div className="flex-1 pl-[3px]">
            <TreeHeading>Properties</TreeHeading>
            <Row label="Test Acceleration" caret="down" line={false} height="h-5" />
            <Row label="m Value" depth={2} height="h-[25px]">
              <HelpBadge className="mr-1.5 h-3 w-3 text-black" mark="#fff" round />
              <Field label="m Value" value="8" className="w-28" />
            </Row>
            <Row label="Target Life" depth={2}><Field label="Target Life" value="10000" unit="hrs" className="w-28" /></Row>
            <Row label="Test Duration" depth={2}><Field label="Test Duration" value="100" unit="hrs" className="w-28" /></Row>
            <Row label="Total Sweeps" depth={2}><Field label="Total Sweeps" value="750" className="w-28" /></Row>
            <Row label="Sweep Rate Linear (min/sweep)" depth={2} height="h-[22px]">8 min</Row>
            <Row label="Min RPM" depth={2}><Field label="Min RPM" value="804.04" unit="RPM" className="w-28" /></Row>
            <Row label="Max RPM" depth={2} last><Field label="Max RPM" value="2293.1" unit="RPM" className="w-28" /></Row>
            <Gap />
            <Row label="Envelope Settings" caret="down" line={false} height="h-[18px]" />
            <Row label="Max rate of change" depth={2}><Field label="Max rate of change" value="6" unit="dB/sec" className="w-28" /></Row>
            <Row label="Max number of segments" depth={2}><Field label="Max number of segments" value="" className="w-28" /></Row>
            <Row label="Min segment frequency length" depth={2} last><Field label="Min segment frequency length" value="" unit="Hz" className="w-28" /></Row>
            <Gap />
            <Row label="FDS" caret="down" line={false} height="h-[18px]" />
            <Row label="Q Value" depth={2}><Field label="Q Value" value="50" className="w-28" /></Row>
            <Row label="Min Frequency" depth={2}><Field label="FDS Min Frequency" value="20" className="w-28" /></Row>
            <Row label="Max Frequency" depth={2}><Field label="FDS Max Frequency" value="2000" className="w-28" /></Row>
          </div>
          <div className="ml-2.5 mt-3.5 h-[272px] w-2 rounded bg-[#c2c2c2]" />
        </div>
      </div>
      <Button className="mx-[7px] mb-[3px] h-6 shrink-0">Export to VibrationVIEW</Button>
    </section>
  )
}

function OrdersPanel() {
  return (
    <section className="flex min-w-0 flex-1 flex-col overflow-hidden rounded-md border-b border-r border-[#777] bg-[#f0f0f0] shadow-md shadow-black/40">
      <h3 className="flex h-7 shrink-0 items-center bg-[#636365] px-2.5 pt-0.5 text-[12px] text-[#e4e4e4]">Orders</h3>
      <OrdersChart />
      <div className="flex h-7 shrink-0 items-center justify-end bg-[#636365] pr-2 text-white">
        <label htmlFor="order-number" className="pr-1.5">Order Number</label>
        <input id="order-number" defaultValue="6.5" className="h-[21px] w-[29px] rounded bg-white text-center text-[#222]" />
        <button className="ml-1 h-[23px] w-[51px] rounded border border-[#ddd]">Insert</button>
        <span className="pl-1.5 pr-1">Show Accelerated Values</span>
        <Switch label="Show Accelerated Values" />
      </div>
      <div className="mb-1 ml-px mr-0.5 mt-1 flex min-h-0 flex-1 bg-white">
        <div className="flex min-w-0 flex-1 flex-col">
          <div className="min-h-0 flex-1 overflow-hidden">
            <table className="w-[1274px] table-fixed border-collapse text-center text-[#333]">
              <thead>
                <tr className="h-6 bg-[#f0f0f0]">
                  <th className="w-[74px] border border-[#c8c8c8] font-normal">
                    <span className="flex items-center justify-center gap-1">Order # <ChevronUp className="h-3 w-3" strokeWidth={2} /></span>
                  </th>
                  {headings.map((h) => <th key={h} className="w-[120px] whitespace-nowrap border border-[#c8c8c8] font-normal">{h}</th>)}
                </tr>
              </thead>
              <tbody>
                {orders.map((row, i) => (
                  <tr key={row[0]} className={`h-7 ${i < 3 ? "bg-[#91b6a9]" : "bg-white"}`}>
                    <td className={`border border-[#cfcfcf] p-0 ${i === 2 ? "bg-[#e2ebe8]" : ""}`}>{row[0]}</td>
                    <td className="border border-[#cfcfcf] p-0"><Button className="h-[22px] w-[110px] text-[#222]">Edit Tone</Button></td>
                    {row.slice(1).map((cell, c) => <td key={c} className="border border-[#cfcfcf] p-0">{cell}</td>)}
                  </tr>
                ))}
              </tbody>
            </table>
          </div>
          <div className="flex h-[15px] items-center bg-[#f0f0f0] pl-4">
            <div className="h-[11px] w-[87%] rounded-sm bg-[#c2c2c2]" />
          </div>
        </div>
        <div className="mb-[15px] w-[17px] bg-[#f0f0f0]" />
      </div>
    </section>
  )
}

function StagWindow() {
  return (
    <div
      role="dialog"
      aria-label="Sine Tracking Analysis and Generation (STAG)"
      className="absolute bottom-[279px] left-[371px] right-[564px] top-[234px] flex flex-col overflow-hidden rounded-lg bg-white shadow-[0_0_14px_rgba(0,0,0,0.35)]"
    >
      <div className="flex h-[29px] shrink-0 items-center bg-[#636365] px-2 text-white">
        <h2 className="flex-1 text-[12px] text-[#e4e4e4]">Sine Tracking Analysis and Generation (STAG)</h2>
        <button aria-label="Window help"><HelpBadge className="h-4 w-4" mark="#555" /></button>
        <button aria-label="Close window" className="-mr-0.5 ml-3.5"><X className="h-4 w-4" strokeWidth={1.5} /></button>
      </div>
      <div className="flex min-h-0 flex-1 gap-2 p-2 pb-1.5 pr-1.5">
        <SettingsPanel />
        <OrdersPanel />
      </div>
      <div className="flex h-[46px] shrink-0 items-center justify-end gap-2 border-t-2 border-[#cfcfcf] bg-[#f0f0f0] pr-2 pt-0.5 text-black">
        <Button className="h-7 w-[75px]">Close</Button>
        <Button className="h-7 w-[71px]">Help</Button>
      </div>
    </div>
  )
}

// ---------- right panel ----------

function PropertiesPanel() {
  return (
    <section className="flex w-[298px] shrink-0 flex-col bg-white pb-px">
      <div className="flex h-5 items-center gap-2 bg-[#636365] px-1.5 text-white">
        <h2 className="flex-1 text-[11px]">Properties</h2>
        <button aria-label="Swap side"><ArrowLeftRight className="h-3 w-3" strokeWidth={3} /></button>
        <button aria-label="Dock"><ArrowDownLeft className="h-3.5 w-3.5" strokeWidth={3} /></button>
        <button aria-label="Undock"><ArrowUpRight className="h-3.5 w-3.5" strokeWidth={3} /></button>
        <button aria-label="Close properties"><X className="h-3 w-3" strokeWidth={3} /></button>
      </div>
      <div className="pl-[9px] pr-[13px] pt-2.5">
        <TreeHeading>Spectrogram Options</TreeHeading>
        <Row label="Analysis Lines:" caret="right"><Select label="Analysis Lines" value="1024" className="h-[21px] w-[113px]" /></Row>
        <Row label="Window Function:" height="h-[25px]"><Select label="Window Function" value="Blackman" className="h-[21px] w-[113px]" /></Row>
        <Row label="Frame Count"><Field label="Frame Count" value="250" className="w-[113px]" /></Row>
        <Row label="Limit Frequency Range" caret="down" line={false} height="h-[21px]"><Check label="Limit Frequency Range" on /></Row>
        <Row label="Min Frequency" depth={2}>
          <button aria-label="Reset min frequency" className="mr-1.5"><RotateCw className="h-3 w-3 -scale-x-100" /></button>
          <Field label="Minimum frequency" value="25" unit="Hz" className="w-[113px]" />
        </Row>
        <Row label="Max Frequency" depth={2} last>
          <button aria-label="Reset max frequency" className="mr-1.5"><RotateCw className="h-3 w-3 -scale-x-100" /></button>
          <Field label="Maximum frequency" value="300" unit="Hz" className="w-[113px]" />
        </Row>
        <Gap height="h-1.5" />
        <Row label="Min RPM"><Field label="Spectrogram min RPM" value="804.04" unit="RPM" className="w-[113px]" /></Row>
        <Row label="Max RPM"><Field label="Spectrogram max RPM" value="2293.1" unit="RPM" className="w-[113px]" /></Row>
        <Row label="Tach Sweep Direction" height="h-[25px]"><Select label="Sweep direction" value="Up" className="h-[21px] w-[113px]" /></Row>
        <Row label="FFT Spacing" height="h-[22px]">5.9563 RPM</Row>
        <Row label="FFT Width" height="h-[22px]" last>2.0000 sec</Row>
        <Gap open={false} />
        <TreeHeading>Graph View Options</TreeHeading>
        <Row label="3D View" height="h-[22px]" last><Check label="3D View" /></Row>
        <Gap open={false} />
        <TreeHeading>Spectrogram Graph Options</TreeHeading>
        <Row label="Show Mouse Cursor" height="h-[22px]"><Check label="Show Mouse Cursor" on /></Row>
        <Row label="Show Frequency Cross-Section" height="h-[22px]"><Check label="Show Frequency Cross-Section" /></Row>
        <Row label="Show Angular Velocity Cross-Section" caret="down" line={false} height="h-5"><Check label="Show Angular Velocity Cross-Section" /></Row>
        <Row label="Show Order Cross-Section" depth={2} last height="h-[22px]"><Check label="Show Order Cross-Section" /></Row>
        <Gap />
        <Row label="Show Order Lines" height="h-[22px]" last><Check label="Show Order Lines" on /></Row>
      </div>
    </section>
  )
}

export default function App() {
  return (
    <div className="relative flex h-screen w-full flex-col overflow-hidden bg-[#f0f0f0] font-['Open_Sans',sans-serif] text-[11px] leading-4 text-[#1c1c1c]">
      <TitleBar />
      <Ribbon />
      <div className="flex min-h-0 flex-1">
        <Rail side="left" items={["Cursor", "Analysis Ranges"]} />
        <main className="flex min-w-0 flex-1 flex-col">
          <div className="flex h-5 shrink-0 items-center">
            <div className="flex h-full items-center gap-2 rounded-t bg-[#636365] px-2.5 pr-1 text-white">
              1) Waveform
              <button aria-label="Close tab"><X className="h-3 w-3" strokeWidth={3} /></button>
            </div>
            <button aria-label="New tab" className="ml-1 text-black"><Plus className="h-3 w-3" strokeWidth={2.5} /></button>
            <div className="ml-auto flex items-center gap-2 pr-1 text-black">
              <svg viewBox="0 0 14 14" className="h-3.5 w-3.5" fill="none" stroke="currentColor" strokeWidth="1.500"><path d="M8 4V1H1v12h7v-3M5 7h9M10 3.500v7" /></svg>
              <Dots />
            </div>
          </div>
          <div className="grid h-5 shrink-0 grid-cols-3 items-center border-y-2 border-b-[#8c8c8c] border-t-[#636365] bg-[#b0b0b0] text-black">
            <button className="flex h-full w-[131px] items-center gap-1 bg-[#5b8f66] pl-2 text-white">
              Follow selected range <Caret />
            </button>
            <span className="text-center">Waveform</span>
            <div className="justify-self-end"><PaneIcons /></div>
          </div>
          <div className="flex min-h-0 flex-[530] border-r border-[#b8b8b8] bg-white">
            <WaveformChart />
            <div className="mt-1.5 w-[221px] shrink-0">
              <div className="border border-[#8c8c8c] bg-[#f0f0f0]">
                <div className="flex h-[17px] items-center justify-end gap-1.5 border-b border-[#b4b4b4] pr-1 text-black">
                  <Plus className="h-3 w-3" strokeWidth={3} />
                  <Dots />
                  <Caret dir="up" />
                </div>
                <div className="mt-px flex h-4 items-center gap-1 pl-0.5"><span className="h-full w-1.5 bg-[#008000]" />Ch1</div>
                <div className="flex h-[17px] items-center gap-1 pl-0.5"><span className="h-full w-1.5 bg-[#0a6ed8]" />Tach</div>
              </div>
            </div>
          </div>
          <div className="flex h-5 shrink-0 items-center justify-end bg-[#636365] text-white"><PaneIcons /></div>
          <Spectrogram />
          <Timeline />
        </main>
        <div className="w-[3px] shrink-0 border-r border-[#e4e4e4]" />
        <PropertiesPanel />
        <Rail side="right" items={["Traces", "Properties", "Statistics", "Files", "Notifications", "Help"]} />
      </div>
      <StagWindow />
    </div>
  )
}
